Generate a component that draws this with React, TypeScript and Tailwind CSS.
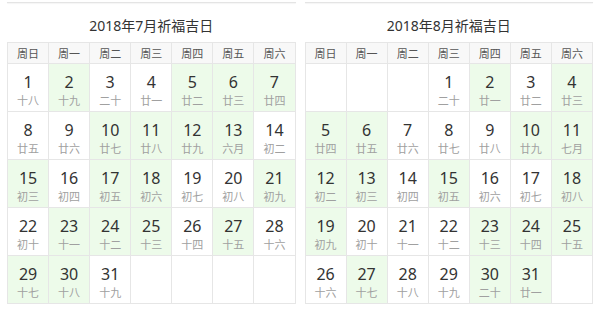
const WEEK = ["周日", "周一", "周二", "周三", "周四", "周五", "周六"];

type Day = { d: number; l: string; g: boolean } | null;

const JULY_LUNAR = [
  "十八", "十九", "二十", "廿一", "廿二", "廿三", "廿四", "廿五", "廿六", "廿七",
  "廿八", "廿九", "六月", "初二", "初三", "初四", "初五", "初六", "初七", "初八",
  "初九", "初十", "十一", "十二", "十三", "十四", "十五", "十六", "十七", "十八", "十九",
];
const AUG_LUNAR = [
  "二十", "廿一", "廿二", "廿三", "廿四", "廿五", "廿六", "廿七", "廿八", "廿九",
  "七月", "初二", "初三", "初四", "初五", "初六", "初七", "初八", "初九", "初十",
  "十一", "十二", "十三", "十四", "十五", "十六", "十七", "十八", "十九", "二十", "廿一",
];

const JULY_GOOD = [2, 5, 6, 7, 10, 11, 12, 13, 15, 17, 18, 21, 23, 24, 25, 27, 29, 30];
const AUG_GOOD = [2, 4, 5, 6, 10, 11, 12, 13, 15, 18, 19, 23, 24, 25, 27, 30, 31];

function buildWeeks(offset: number, lunar: string[], good: number[]): Day[][] {
  const cells: Day[] = [];
  for (let i = 0; i < offset; i++) cells.push(null);
  lunar.forEach((l, i) => cells.push({ d: i + 1, l, g: good.includes(i + 1) }));
  while (cells.length % 7) cells.push(null);
  const weeks: Day[][] = [];
  for (let i = 0; i < cells.length; i += 7) weeks.push(cells.slice(i, i + 7));
  return weeks;
}

const MonthCard = ({ title, weeks }: { title: string; weeks: Day[][] }) => (
  <div className="flex-1 min-w-0">
    {/* bottom edge of the card above */}
    <div className="h-[3px] border-b border-[#e4e4e4] bg-white shadow-[0_1px_1px_rgba(0,0,0,0.04)]" />
    <div className="mt-[13px] mb-[6px] text-center text-[14px] leading-[20px] text-[#333]">
      {title}
    </div>
    <table className="w-full table-fixed border-collapse">
      <thead>
        <tr>
          {WEEK.map((w) => (
            <th
              key={w}
              className="h-[21px] border border-[#e6e6e6] bg-[#f8f8f8] p-0 text-[11px] font-normal leading-[19px] text-[#555]"
            >
              {w}
            </th>
          ))}
        </tr>
      </thead>
      <tbody>
        {weeks.map((week, wi) => (
          <tr key={wi}>
            {week.map((day, di) => (
              <td
                key={di}
                className={`h-[48px] border border-[#e6e6e6] p-0 text-center align-top ${
                  day && day.g ? "bg-[#edfbea]" : "bg-white"
                }`}
              >
                {day && (
                  <div className="pt-[8px]">
                    <div className="text-[16px] leading-[20px] text-[#333]">{day.d}</div>
                    <div className="mt-[2px] text-[11px] leading-[14px] text-[#a0a0a0]">{day.l}</div>
                  </div>
                )}
              </td>
            ))}
          </tr>
        ))}
      </tbody>
    </table>
  </div>
);

export default function App() {
  const july = buildWeeks(0, JULY_LUNAR, JULY_GOOD);
  const aug = buildWeeks(3, AUG_LUNAR, AUG_GOOD);
  return (
    <div
      className="flex h-[316px] w-[600px] gap-[9px] overflow-hidden bg-white px-[7px]"
      style={{ fontFamily: '"Noto Sans", "Noto Sans CJK SC", sans-serif' }}
    >
      <MonthCard title="2018年7月祈福吉日" weeks={july} />
      <MonthCard title="2018年8月祈福吉日" weeks={aug} />
    </div>
  );
}
